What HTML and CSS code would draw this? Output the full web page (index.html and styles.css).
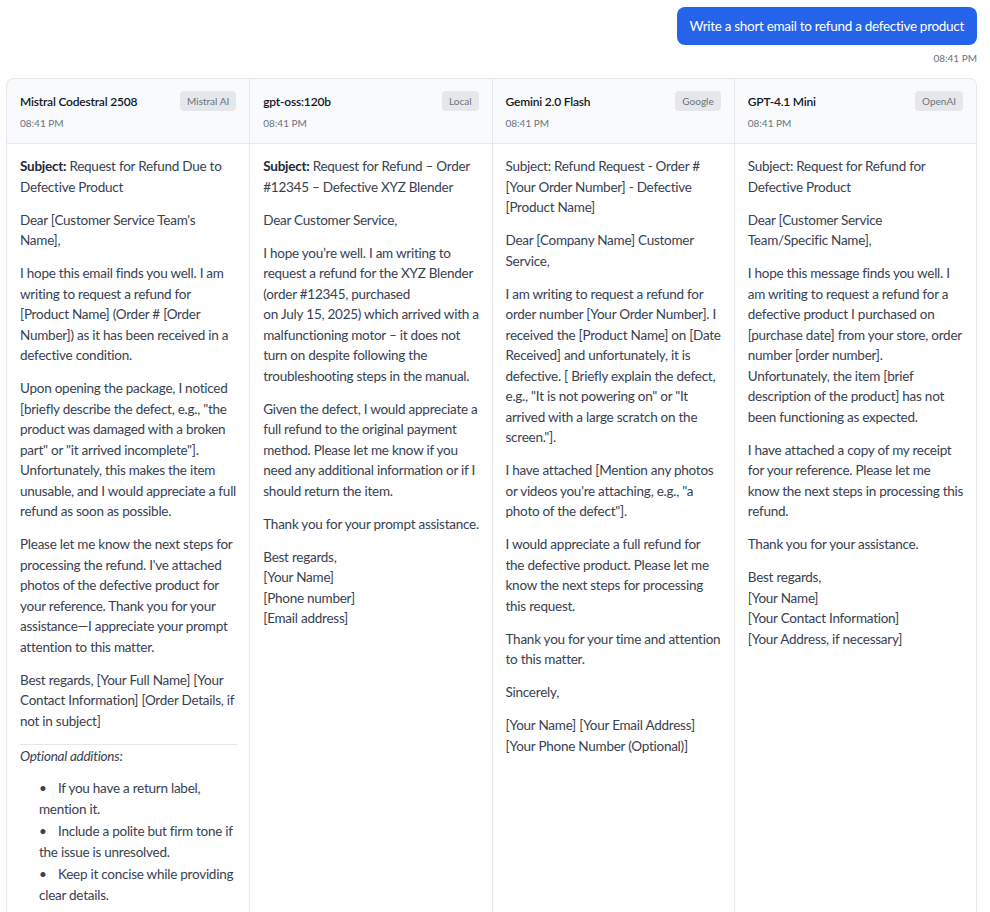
FILE: index.html
```html
<!DOCTYPE html>
<html lang="en">
<head>
<meta charset="utf-8">
<title>Compare</title>
<link rel="stylesheet" href="styles.css">
</head>
<body>
<div class="page">
  <div class="user-msg">
    <div class="bubble">Write a short email to refund a defective product</div>
    <div class="msg-time">08:41 PM</div>
  </div>
  <div class="grid">
    <div class="col">
      <div class="col-head">
        <div class="head-row"><span class="model">Mistral Codestral 2508</span><span class="badge">Mistral AI</span></div>
        <div class="time">08:41 PM</div>
      </div>
      <div class="col-body">
        <p><strong>Subject:</strong> Request for Refund Due to Defective Product</p>
        <p>Dear [Customer Service Team's Name],</p>
        <p>I hope this email finds you well. I am writing to request a refund for [Product Name] (Order # [Order Number]) as it has been received in a defective condition.</p>
        <p>Upon opening the package, I noticed [briefly describe the defect, e.g., "the product was damaged with a broken part" or "it arrived incomplete"]. Unfortunately, this makes the item unusable, and I would appreciate a full refund as soon as possible.</p>
        <p>Please let me know the next steps for processing the refund. I've attached photos of the defective product for your reference. Thank you for your assistance—I appreciate your prompt attention to this matter.</p>
        <p>Best regards, [Your Full Name] [Your Contact Information] [Order Details, if not in subject]</p>
        <hr>
        <p class="tight"><em>Optional additions:</em></p>
        <ul>
          <li>If you have a return label, mention it.</li>
          <li>Include a polite but firm tone if the issue is unresolved.</li>
          <li>Keep it concise while providing clear details.</li>
        </ul>
      </div>
    </div>
    <div class="col">
      <div class="col-head">
        <div class="head-row"><span class="model">gpt-oss:120b</span><span class="badge">Local</span></div>
        <div class="time">08:41 PM</div>
      </div>
      <div class="col-body">
        <p><strong>Subject:</strong> Request for Refund – Order #12345 – Defective XYZ Blender</p>
        <p>Dear Customer Service,</p>
        <p>I hope you’re well. I am writing to request a refund for the XYZ Blender (order #12345, purchased on&#8239;July&#8239;15,&#8239;2025) which arrived with a malfunctioning motor – it does not turn on despite following the troubleshooting steps in the manual.</p>
        <p>Given the defect, I would appreciate a full refund to the original payment method. Please let me know if you need any additional information or if I should return the item.</p>
        <p>Thank you for your prompt assistance.</p>
        <p>Best regards,<br>[Your Name]<br>[Phone number]<br>[Email address]</p>
      </div>
    </div>
    <div class="col">
      <div class="col-head">
        <div class="head-row"><span class="model">Gemini 2.0 Flash</span><span class="badge">Google</span></div>
        <div class="time">08:41 PM</div>
      </div>
      <div class="col-body">
        <p>Subject: Refund Request - Order # [Your Order Number] - Defective [Product Name]</p>
        <p>Dear [Company Name] Customer Service,</p>
        <p>I am writing to request a refund for order number [Your Order Number]. I received the [Product Name] on [Date Received] and unfortunately, it is defective. [ Briefly explain the defect, e.g., "It is not powering on" or "It arrived with a large scratch on the screen."].</p>
        <p>I have attached [Mention any photos or videos you're attaching, e.g., "a photo of the defect"].</p>
        <p>I would appreciate a full refund for the defective product. Please let me know the next steps for processing this request.</p>
        <p>Thank you for your time and attention to this matter.</p>
        <p>Sincerely,</p>
        <p>[Your Name] [Your Email Address] [Your Phone Number (Optional)]</p>
      </div>
    </div>
    <div class="col">
      <div class="col-head">
        <div class="head-row"><span class="model">GPT-4.1 Mini</span><span class="badge">OpenAI</span></div>
        <div class="time">08:41 PM</div>
      </div>
      <div class="col-body">
        <p>Subject: Request for Refund for Defective Product</p>
        <p>Dear [Customer Service Team/Specific Name],</p>
        <p>I hope this message finds you well. I am writing to request a refund for a defective product I purchased on [purchase date] from your store, order number [order number]. Unfortunately, the item [brief description of the product] has not been functioning as expected.</p>
        <p>I have attached a copy of my receipt for your reference. Please let me know the next steps in processing this refund.</p>
        <p>Thank you for your assistance.</p>
        <p>Best regards,<br>[Your Name]<br>[Your Contact Information]<br>[Your Address, if necessary]</p>
      </div>
    </div>
  </div>
</div>
</body>
</html>
```
FILE: styles.css
```css
* { box-sizing: border-box; }
html, body { margin: 0; padding: 0; background: #ffffff; }
body {
  font-family: "Segoe UI", "Lato", "Liberation Sans", sans-serif;
  color: #374151;
  font-size: 13.5px;
  letter-spacing: -0.25px;
}
.page {
  padding: 7px 13px 0 6px;
}
.user-msg {
  display: flex;
  flex-direction: column;
  align-items: flex-end;
}
.bubble {
  background: #2563eb;
  color: #ffffff;
  font-size: 13.5px;
  letter-spacing: -0.3px;
  line-height: 20px;
  padding: 9px 13px;
  border-radius: 8px;
}
.msg-time {
  font-size: 10px;
  letter-spacing: 0;
  color: #6b7280;
  margin-top: 7px;
  line-height: 12px;
}
.grid {
  margin-top: 14px;
  display: grid;
  grid-template-columns: repeat(4, 1fr);
  border: 1px solid #e5e7eb;
  border-bottom: none;
  border-radius: 8px 8px 0 0;
  overflow: hidden;
}
.col {
  border-left: 1px solid #e5e7eb;
  display: flex;
  flex-direction: column;
  min-height: 840px;
}
.col:first-child { border-left: none; }
.col-head {
  background: #f9fafb;
  border-bottom: 1px solid #e5e7eb;
  padding: 12px 13px 12px 13px;
  height: 65px;
}
.head-row {
  display: flex;
  justify-content: space-between;
  align-items: center;
  height: 20px;
}
.model {
  font-size: 12px;
  font-weight: 600;
  letter-spacing: -0.2px;
  color: #111827;
}
.badge {
  background: #e5e7eb;
  color: #6b7280;
  font-size: 10px;
  letter-spacing: 0;
  line-height: 20px;
  padding: 0 7px;
  border-radius: 4px;
}
.time {
  font-size: 10px;
  letter-spacing: 0;
  color: #6b7280;
  margin-top: 6px;
  line-height: 12px;
}
.col-body {
  padding: 12px 12px 0 13px;
  line-height: 20.5px;
}
.col-body p { margin: 0 0 12.5px 0; }
.col-body strong { font-weight: 700; color: #1f2937; }
.col-body hr {
  border: none;
  border-top: 1px solid #e5e7eb;
  margin: 0 0 1px 0;
}
.col-body p.tight { margin: 0; }
.col-body ul {
  list-style: none;
  margin: 12px 0 0 0;
  padding: 0 0 0 19px;
}
.col-body li { margin-bottom: 2px; }
.col-body li::before {
  content: "•";
  display: inline-block;
  width: 19px;
}
```
